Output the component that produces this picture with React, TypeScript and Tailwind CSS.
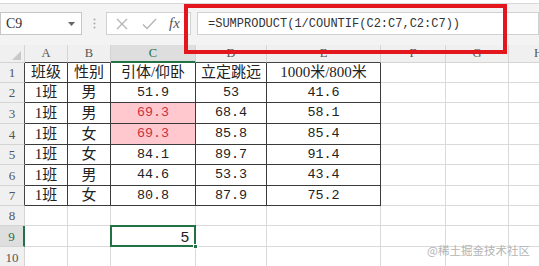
import React from "react";

const data: string[][] = [
  ["班级", "性别", "引体/仰卧", "立定跳远", "1000米/800米"],
  ["1班", "男", "51.9", "53", "41.6"],
  ["1班", "男", "69.3", "68.4", "58.1"],
  ["1班", "女", "69.3", "85.8", "85.4"],
  ["1班", "女", "84.1", "89.7", "91.4"],
  ["1班", "男", "44.6", "53.3", "43.4"],
  ["1班", "女", "80.8", "87.9", "75.2"],
];

const colLetters = ["A", "B", "C", "D", "E", "F", "G", "H"];
const rowHeights = [20, 20, 21, 21, 20, 21, 20, 20, 21, 21];

const serif = { fontFamily: '"Liberation Serif", "Noto Sans CJK SC", serif' };

export default function App() {
  const cells: React.ReactNode[] = [];

  cells.push(
    <div key="corner" className="relative h-[18px] bg-[#f0f0f0] border-r border-b border-[#d4d4d4]">
      <svg className="absolute right-[3px] bottom-[2px]" width="9" height="9" viewBox="0 0 9 9">
        <polygon points="9,0 9,9 0,9" fill="#c8c8c8" />
      </svg>
    </div>
  );
  colLetters.forEach((l, i) => {
    const isC = i === 2;
    const inData = i <= 4;
    cells.push(
      <div
        key={"h" + l}
        className={
          "h-[18px] flex items-center justify-center text-[12.5px] leading-none border-r " +
          (isC
            ? "bg-[#dedede] text-[#217346] border-b-2 border-b-[#217346] border-r-[#d4d4d4]"
            : inData
            ? "bg-[#f0f0f0] text-[#555] border-b border-b-[#444] border-r-[#d4d4d4]"
            : "bg-[#f0f0f0] text-[#555] border-b border-b-[#d4d4d4] border-r-[#d4d4d4]")
        }
        style={serif}
      >
        {l}
      </div>
    );
  });

  for (let r = 0; r < 10; r++) {
    const rowNum = r + 1;
    const h = rowHeights[r] === 21 ? "h-[21px]" : "h-[20px]";
    const isSel = rowNum === 9;
    const inDataRow = rowNum <= 7;
    cells.push(
      <div
        key={"r" + rowNum}
        className={
          h +
          " flex items-center justify-center text-[13px] leading-none border-b border-b-[#d4d4d4] " +
          (isSel
            ? "bg-[#dedede] text-[#217346] border-r-2 border-r-[#217346]"
            : inDataRow
            ? "bg-[#f0f0f0] text-[#555] border-r border-r-[#444]"
            : "bg-[#f0f0f0] text-[#555] border-r border-r-[#d4d4d4]")
        }
        style={serif}
      >
        {rowNum}
      </div>
    );
    for (let c = 0; c < 8; c++) {
      const key = "c" + rowNum + "-" + c;
      if (inDataRow && c <= 4) {
        const v = data[r][c];
        const isNum = /^[0-9.]+$/.test(v);
        const red = c === 2 && (rowNum === 3 || rowNum === 4);
        cells.push(
          <div
            key={key}
            className={
              h +
              " flex items-center justify-center whitespace-nowrap border-r border-b border-[#3a3a3a] leading-none " +
              (red ? "bg-[#ffc7ce] text-[#c8323f] " : "bg-white text-[#222] ") +
              (isNum ? "text-[13.4px]" : "text-[15px]")
            }
            style={
              isNum
                ? { fontFamily: '"Liberation Mono", monospace' }
                : serif
            }
          >
            {v}
          </div>
        );
      } else if (rowNum === 9 && c === 2) {
        cells.push(
          <div
            key={key}
            className={h + " relative flex items-center justify-end pr-[6px] bg-white border-r border-b border-[#dadada] text-[15px] leading-none text-[#222]"}
            style={{ fontFamily: '"Liberation Sans", sans-serif' }}
          >
            5
            <div className="absolute -left-[1px] -top-[1px] -right-[1px] -bottom-[1px] border-2 border-[#217346]" />
            <div className="absolute -right-[3px] -bottom-[3px] w-[5px] h-[5px] bg-[#217346] border border-white" />
          </div>
        );
      } else {
        cells.push(
          <div
            key={key}
            className={h + " bg-white border-r border-b border-[#dadada]"}
          />
        );
      }
    }
  }

  return (
    <div className="relative w-[539px] h-[266px] overflow-hidden bg-white">
      <div className="h-[45px] bg-[#f3f3f3] flex flex-col">
        <div className="h-[4px] bg-white border-b border-[#d8d8d8]" />
        <div className="flex items-start pt-[8px]">
          <div className="w-[82px] h-[23px] bg-white border border-[#c6c6c6] flex items-center justify-between pl-[5px] pr-[6px]">
            <span className="text-[14px] text-[#333] leading-none" style={serif}>C9</span>
            <svg width="7" height="4" viewBox="0 0 7 4"><polygon points="0,0 7,0 3.5,4" fill="#666" /></svg>
          </div>
          <div className="w-[24px] h-[23px] flex items-center justify-center">
            <svg width="3" height="11" viewBox="0 0 3 11">
              <circle cx="1.5" cy="1.5" r="1" fill="#aaa" />
              <circle cx="1.5" cy="5.5" r="1" fill="#aaa" />
              <circle cx="1.5" cy="9.5" r="1" fill="#aaa" />
            </svg>
          </div>
          <div className="w-[85px] h-[23px] bg-white border border-[#d0d0d0] flex items-center pl-[8px]">
            <svg width="14" height="14" viewBox="0 0 14 14" className="mr-[13px]">
              <path d="M2 2 L12 12 M12 2 L2 12" stroke="#b4b4b4" strokeWidth="1.3" />
            </svg>
            <svg width="15" height="12" viewBox="0 0 15 12" className="mr-[12px]">
              <path d="M1 6.5 L5 10.5 L14 1" stroke="#b4b4b4" strokeWidth="1.3" fill="none" />
            </svg>
            <span className="text-[15px] italic text-[#555] leading-none" style={serif}>fx</span>
          </div>
          <div className="ml-[6px] flex-1 h-[23px] bg-white border border-[#d0d0d0] flex items-center pl-[10px]">
            <span className="text-[12px] text-[#333] leading-none whitespace-nowrap" style={{ fontFamily: '"Liberation Mono", monospace' }}>
              =SUMPRODUCT(1/COUNTIF(C2:C7,C2:C7))
            </span>
          </div>
        </div>
      </div>

      <div className="grid grid-cols-[25px_43px_43px_85px_71px_114px_65px_63px_60px]">
        {cells}
      </div>

      <div className="absolute left-[184px] top-[4px] w-[323px] h-[50px] border-[4px] border-[#e3161d]" />

      <div
        className="absolute left-[427px] top-[245px] text-[11.5px] text-[#b4b4b4] whitespace-nowrap leading-none"
        style={{ fontFamily: '"Noto Sans CJK SC", sans-serif' }}
      >
        @稀土掘金技术社区
      </div>
    </div>
  );
}
